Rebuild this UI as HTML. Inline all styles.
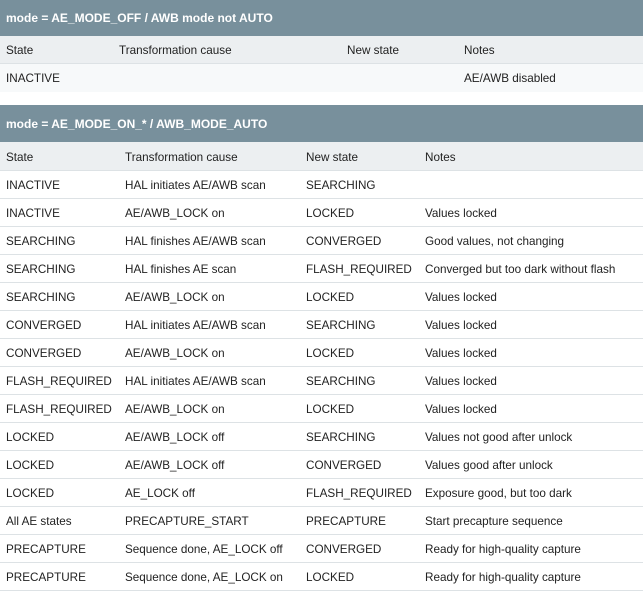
<!DOCTYPE html>
<html><head><style>
body{margin:0;width:643px;height:600px;background:#fff;font-family:"Liberation Sans",sans-serif;font-size:11.7px;color:#222;overflow:hidden}
.t{position:absolute;left:0;width:643px}
.h{background:#78909c;color:#fff;font-weight:bold;font-size:12px;height:36px;line-height:36px;padding-left:6px;box-sizing:border-box}
.r{position:relative;height:28px;border-bottom:1px solid #dde2e5;box-sizing:border-box}
.r span{position:absolute;top:1px;line-height:27px;white-space:nowrap}
.ch{background:#eceff1}
.b1{background:#f7f9fa}
</style></head><body>
<div class="t" style="top:0">
<div class="h">mode = AE_MODE_OFF / AWB mode not AUTO</div>
<div class="r ch"><span style="left:6px">State</span><span style="left:119px">Transformation cause</span><span style="left:347px">New state</span><span style="left:464px">Notes</span></div>
<div class="r b1" style="border-bottom:none"><span style="left:6px">INACTIVE</span><span style="left:464px">AE/AWB disabled</span></div>
</div>
<div class="t" style="top:105px">
<div class="h" style="height:37px;line-height:39px">mode = AE_MODE_ON_* / AWB_MODE_AUTO</div>
<div class="r ch" style="height:29px"><span style="left:6px;line-height:29px">State</span><span style="left:125px;line-height:29px">Transformation cause</span><span style="left:306px;line-height:29px">New state</span><span style="left:425px;line-height:29px">Notes</span></div>
<div class="r"><span style="left:6px">INACTIVE</span><span style="left:125px">HAL initiates AE/AWB scan</span><span style="left:306px">SEARCHING</span><span style="left:425px"></span></div>
<div class="r"><span style="left:6px">INACTIVE</span><span style="left:125px">AE/AWB_LOCK on</span><span style="left:306px">LOCKED</span><span style="left:425px">Values locked</span></div>
<div class="r"><span style="left:6px">SEARCHING</span><span style="left:125px">HAL finishes AE/AWB scan</span><span style="left:306px">CONVERGED</span><span style="left:425px">Good values, not changing</span></div>
<div class="r"><span style="left:6px">SEARCHING</span><span style="left:125px">HAL finishes AE scan</span><span style="left:306px">FLASH_REQUIRED</span><span style="left:425px">Converged but too dark without flash</span></div>
<div class="r"><span style="left:6px">SEARCHING</span><span style="left:125px">AE/AWB_LOCK on</span><span style="left:306px">LOCKED</span><span style="left:425px">Values locked</span></div>
<div class="r"><span style="left:6px">CONVERGED</span><span style="left:125px">HAL initiates AE/AWB scan</span><span style="left:306px">SEARCHING</span><span style="left:425px">Values locked</span></div>
<div class="r"><span style="left:6px">CONVERGED</span><span style="left:125px">AE/AWB_LOCK on</span><span style="left:306px">LOCKED</span><span style="left:425px">Values locked</span></div>
<div class="r"><span style="left:6px">FLASH_REQUIRED</span><span style="left:125px">HAL initiates AE/AWB scan</span><span style="left:306px">SEARCHING</span><span style="left:425px">Values locked</span></div>
<div class="r"><span style="left:6px">FLASH_REQUIRED</span><span style="left:125px">AE/AWB_LOCK on</span><span style="left:306px">LOCKED</span><span style="left:425px">Values locked</span></div>
<div class="r"><span style="left:6px">LOCKED</span><span style="left:125px">AE/AWB_LOCK off</span><span style="left:306px">SEARCHING</span><span style="left:425px">Values not good after unlock</span></div>
<div class="r"><span style="left:6px">LOCKED</span><span style="left:125px">AE/AWB_LOCK off</span><span style="left:306px">CONVERGED</span><span style="left:425px">Values good after unlock</span></div>
<div class="r"><span style="left:6px">LOCKED</span><span style="left:125px">AE_LOCK off</span><span style="left:306px">FLASH_REQUIRED</span><span style="left:425px">Exposure good, but too dark</span></div>
<div class="r"><span style="left:6px">All AE states</span><span style="left:125px">PRECAPTURE_START</span><span style="left:306px">PRECAPTURE</span><span style="left:425px">Start precapture sequence</span></div>
<div class="r"><span style="left:6px">PRECAPTURE</span><span style="left:125px">Sequence done, AE_LOCK off</span><span style="left:306px">CONVERGED</span><span style="left:425px">Ready for high-quality capture</span></div>
<div class="r"><span style="left:6px">PRECAPTURE</span><span style="left:125px">Sequence done, AE_LOCK on</span><span style="left:306px">LOCKED</span><span style="left:425px">Ready for high-quality capture</span></div>
</div>
</body></html>
